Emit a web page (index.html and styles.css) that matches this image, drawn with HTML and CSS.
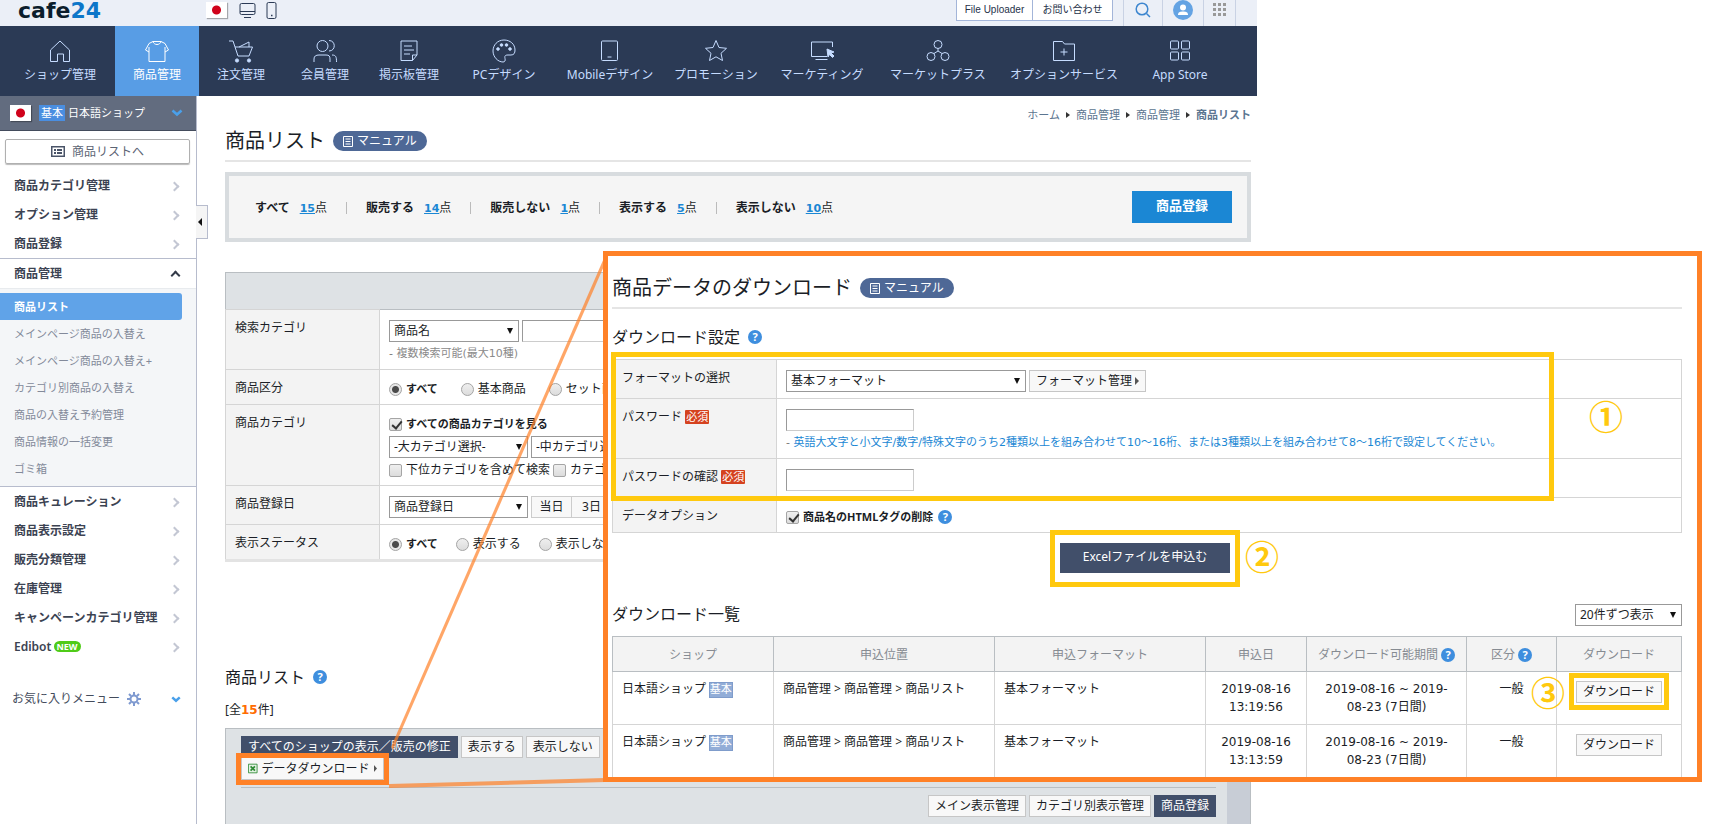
FILE: index.html
```html
<!DOCTYPE html>
<html lang="ja">
<head>
    <meta charset="UTF-8">
    <meta name="viewport" content="width=device-width, initial-scale=1.0">
    <title>商品リスト - cafe24</title>
    <link rel="stylesheet" href="styles.css">
</head>
<body>
    <div class="app">
        <header class="topbar">
            <a class="logo" href="#">cafe<span>24</span></a>
            <span class="flag"></span>
            <svg class="device" width="38" height="18" viewBox="0 0 38 18" fill="none" stroke="#2b3a55">
                <rect x="1" y="1.500" width="15" height="11" rx="1.500"/><path d="M1 9.500h15M5 15.500h7"/>
                <rect x="28" y=".5" width="9" height="16" rx="1.500"/><path d="M32 13.500h1.500" stroke-width="1.500"/>
            </svg>
            <div class="top-links">
                <a href="#">File Uploader</a>
                <a href="#">お問い合わせ</a>
            </div>
            <div class="top-icons">
                <a href="#" class="search"><svg width="16" height="16" viewBox="0 0 16 16" fill="none" stroke="#3d86cf" stroke-width="1.500"><circle cx="7" cy="7" r="5.800"/><path d="M11.500 11.500l3.500 3.500"/></svg></a>
                <a href="#" class="user"><svg width="20" height="20" viewBox="0 0 20 20"><circle cx="10" cy="10" r="10" fill="#64a3e3"/><circle cx="10" cy="7.500" r="3" fill="#fff"/><path d="M5 15c0-3 2-3.500 5-3.500s5 .5 5 3.500z" fill="#fff"/></svg></a>
                <a href="#" class="grid"><svg width="13" height="13" viewBox="0 0 13 13" fill="#999"><path d="M0 0h3v3H0zM5 0h3v3H5zM10 0h3v3h-3zM0 5h3v3H0zM5 5h3v3H5zM10 5h3v3h-3zM0 10h3v3H0zM5 10h3v3H5zM10 10h3v3h-3z"/></svg></a>
            </div>
        </header>

        <nav class="gnb">
            <a href="#" class="first"><svg viewBox="0 0 24 24"><path d="M2.500 11L12 2l9.500 9v11.500h-6V15h-6v7.500h-7z"/></svg>ショップ管理</a>
            <a href="#" class="on"><svg viewBox="0 0 24 24"><path d="M8 2.500L4 4.500 0.500 11l3.500 2v9.500h16V13l3.500-2L20 4.500 16 2.500c-1 4-7 4-8 0zM8 2.500h8M4 8v5M20 8v5"/></svg>商品管理</a>
            <a href="#"><svg viewBox="0 0 24 24"><path d="M0 2h4l5 15h11l3.500-9H6M10 8l10-5v5"/><circle class="fill" cx="8" cy="21.500" r="1.600"/><circle class="fill" cx="20" cy="21.500" r="1.600"/></svg>注文管理</a>
            <a href="#"><svg viewBox="0 0 24 24"><circle cx="9.500" cy="7" r="5.500"/><path d="M1 23v-3c0-3 2-4 5-4h7c3 0 4 1 4 4v3M16 1.500c7 0 7 10.500 0 10.500M19 16c4 0 4.500 2 4.500 7"/></svg>会員管理</a>
            <a href="#"><svg viewBox="0 0 24 24"><path d="M4 2h16v14l-4.500 5.500H4zM20 16h-4.500v5.500M7 7h8M7 11h10M7 15h6"/></svg>掲示板管理</a>
            <a href="#" class="mid"><svg viewBox="0 0 24 24"><path d="M12 1C5.500 1 1 6 1 12c0 6 5 11 10 11 2 0 2.500-1.500 2-3.500-.5-2.500 0-3.500 3-3.500h3c3 0 4-2 4-5C23 5 18 1 12 1z"/><circle class="fill" cx="6" cy="10" r="1.300"/><circle class="fill" cx="9.500" cy="6" r="1.300"/><circle class="fill" cx="14.500" cy="6" r="1.300"/><circle class="fill" cx="18" cy="10" r="1.300"/></svg>PCデザイン</a>
            <a href="#" class="mid"><svg viewBox="0 0 24 24"><rect x="3.500" y="2" width="16" height="19.500" rx="1"/><path d="M9.500 18h4"/></svg>Mobileデザイン</a>
            <a href="#" class="mid"><svg viewBox="0 0 24 24"><path d="M12 1.500l3 7 7.500.8-5.500 5 1.500 7.200-6.500-3.700-6.500 3.700L7 14.300l-5.500-5L9 8.500z"/></svg>プロモーション</a>
            <a href="#" class="mid"><svg viewBox="0 0 24 24"><path d="M22.500 8V3h-21v14.500H17M5.500 20.500h12"/><path class="fill" d="M17 10l7 3-3 1 3 3-1.500 1.500-3-3L18 18z"/></svg>マーケティング</a>
            <a href="#" class="long"><svg viewBox="0 0 24 24"><circle cx="12" cy="5.500" r="4"/><circle cx="5" cy="17.500" r="4"/><circle cx="19" cy="17.500" r="4"/><path d="M12 9.500V12l-4 2.500M12 12l4 2.500"/></svg>マーケットプラス</a>
            <a href="#" class="long"><svg viewBox="0 0 24 24"><path d="M1.500 21.500v-19h9l2 2.500h10v16.500zM12 9.500v7M8.500 13h7"/></svg>オプションサービス</a>
            <a href="#" class="mid"><svg viewBox="0 0 24 24"><rect x="2.500" y="2" width="8" height="8" rx="1"/><rect x="13.500" y="2" width="8" height="8" rx="1"/><rect x="2.500" y="13" width="8" height="8" rx="1"/><rect x="13.500" y="13" width="8" height="8" rx="1"/></svg>App Store</a>
        </nav>

        <div class="body">
            <aside class="sidebar">
                <div class="shop">
                    <span class="flag"></span>
                    <span class="shop-badge">基本</span>
                    <span>日本語ショップ</span>
                    <svg class="chev" width="12" height="8" viewBox="0 0 12 8" fill="none" stroke="#4aa0ea" stroke-width="2.500"><path d="M1.500 1.500L6 5.500l4.500-4"/></svg>
                </div>
                <a class="to-list" href="#">
                    <svg width="14" height="11" viewBox="0 0 14 11"><rect x=".75" y=".75" width="12.500" height="9.500" fill="none" stroke="#4a5468" stroke-width="1.500"/><path d="M3 3h2v2H3zM6 3h5v2H6zM3 6h2v2H3zM6 6h5v2H6z" fill="#4a5468"/></svg>
                    商品リストへ
                </a>
                <ul class="lnb">
                    <li><a href="#">商品カテゴリ管理</a></li>
                    <li><a href="#">オプション管理</a></li>
                    <li><a href="#">商品登録</a></li>
                    <li class="open"><a href="#">商品管理</a>
                        <ul>
                            <li class="on"><a href="#">商品リスト</a></li>
                            <li><a href="#">メインページ商品の入替え</a></li>
                            <li><a href="#">メインページ商品の入替え+</a></li>
                            <li><a href="#">カテゴリ別商品の入替え</a></li>
                            <li><a href="#">商品の入替え予約管理</a></li>
                            <li><a href="#">商品情報の一括変更</a></li>
                            <li><a href="#">ゴミ箱</a></li>
                        </ul>
                    </li>
                    <li><a href="#">商品キュレーション</a></li>
                    <li><a href="#">商品表示設定</a></li>
                    <li><a href="#">販売分類管理</a></li>
                    <li><a href="#">在庫管理</a></li>
                    <li><a href="#">キャンペーンカテゴリ管理</a></li>
                    <li><a href="#">Edibot <em>NEW</em></a></li>
                </ul>
                <div class="favorite">
                    <span>お気に入りメニュー</span>
                    <svg width="14" height="14" viewBox="0 0 14 14" fill="none" stroke="#7f9ad0"><circle cx="7" cy="7" r="3.500" stroke-width="2"/><path stroke-width="2" d="M7 0v3M7 11v3M0 7h3M11 7h3M2 2l2 2M10 10l2 2M2 12l2-2M10 4l2-2"/></svg>
                    <svg class="chev" width="10" height="7" viewBox="0 0 12 8" fill="none" stroke="#4aa0ea" stroke-width="3"><path d="M1.500 1.500L6 5.500l4.500-4"/></svg>
                </div>
                <button class="fold" type="button" aria-label="メニューを閉じる"></button>
            </aside>

            <main>
                <p class="path"><a href="#">ホーム</a><a href="#">商品管理</a><a href="#">商品管理</a><strong>商品リスト</strong></p>
                <h1>商品リスト <a class="manual" href="#"><svg width="10" height="11" viewBox="0 0 10 11" fill="none" stroke="#fff"><path d="M.5.500h9v10h-9zM2.500 3h5M2.500 5.500h5M2.500 8h5"/></svg>マニュアル</a></h1>

                <div class="summary">
                    <ul>
                        <li>すべて <span><a href="#">15</a>点</span></li>
                        <li>販売する <span><a href="#">14</a>点</span></li>
                        <li>販売しない <span><a href="#">1</a>点</span></li>
                        <li>表示する <span><a href="#">5</a>点</span></li>
                        <li>表示しない <span><a href="#">10</a>点</span></li>
                    </ul>
                    <button type="button" class="btn-regist">商品登録</button>
                </div>

                <div class="search-head"></div>
                <table class="form search-form">
                    <tr>
                        <th><label for="search-type">検索カテゴリ</label></th>
                        <td>
                            <div class="line">
                                <span class="select w130"><select id="search-type"><option>商品名</option></select></span>
                                <input type="text" class="keyword" aria-label="検索キーワード">
                            </div>
                            <p class="note"><span>-</span> 複数検索可能(最大10種)</p>
                        </td>
                    </tr>
                    <tr>
                        <th>商品区分</th>
                        <td>
                            <div class="line choices wide">
                                <label><input type="radio" name="kind" checked><b>すべて</b></label>
                                <label><input type="radio" name="kind">基本商品</label>
                                <label><input type="radio" name="kind">セット商品</label>
                            </div>
                        </td>
                    </tr>
                    <tr>
                        <th>商品カテゴリ</th>
                        <td>
                            <div class="line choices"><label><input type="checkbox" checked><b>すべての商品カテゴリを見る</b></label></div>
                            <div class="line">
                                <span class="select w138"><select aria-label="大カテゴリ"><option>-大カテゴリ選択-</option></select></span>
                                <span class="select w138"><select aria-label="中カテゴリ"><option>-中カテゴリ選択-</option></select></span>
                            </div>
                            <div class="line choices tight">
                                <label><input type="checkbox">下位カテゴリを含めて検索</label>
                                <label><input type="checkbox">カテゴリ未登録</label>
                            </div>
                        </td>
                    </tr>
                    <tr>
                        <th><label for="date-type">商品登録日</label></th>
                        <td>
                            <div class="line">
                                <span class="select w138"><select id="date-type"><option>商品登録日</option></select></span>
                                <span class="days"><button type="button">当日</button><button type="button">3日</button></span>
                            </div>
                        </td>
                    </tr>
                    <tr>
                        <th>表示ステータス</th>
                        <td>
                            <div class="line choices">
                                <label><input type="radio" name="display" checked><b>すべて</b></label>
                                <label><input type="radio" name="display">表示する</label>
                                <label><input type="radio" name="display">表示しない</label>
                            </div>
                        </td>
                    </tr>
                </table>

                <h2>商品リスト <span class="help">?</span></h2>
                <p class="total">[全<strong>15</strong>件]</p>
                <div class="list-panel">
                    <div class="list-inner">
                        <div class="row">
                            <button type="button" class="btn dark">すべてのショップの表示／販売の修正</button>
                            <button type="button" class="btn">表示する</button>
                            <button type="button" class="btn">表示しない</button>
                        </div>
                        <div class="row">
                            <span class="excel-mark">
                                <button type="button" class="btn excel"><svg width="11" height="11" viewBox="0 0 11 11" fill="none" stroke="#2e8b35"><path fill="#e4f3e4" d="M.5.500h10v10H.5z"/><path stroke-width="2" d="M3 3l5 5M8 3L3 8"/></svg>データダウンロード<i class="arrow"></i></button>
                            </span>
                        </div>
                        <div class="row bottom">
                            <button type="button" class="btn">メイン表示管理</button>
                            <button type="button" class="btn">カテゴリ別表示管理</button>
                            <button type="button" class="btn dark">商品登録</button>
                        </div>
                    </div>
                </div>
            </main>
        </div>
    </div>

    <!-- guide lines from the download button to the popup -->
    <svg class="guide" width="216" height="536" viewBox="0 0 216 536">
        <path d="M215 6v8L4 498l-2-3z"/>
        <path d="M0 532l216-6v4L0 536z"/>
    </svg>

    <section class="popup">
        <h1>商品データのダウンロード <a class="manual" href="#"><svg width="10" height="11" viewBox="0 0 10 11" fill="none" stroke="#fff"><path d="M.5.500h9v10h-9zM2.500 3h5M2.500 5.500h5M2.500 8h5"/></svg>マニュアル</a></h1>
        <h2>ダウンロード設定 <span class="help">?</span></h2>
        <div class="setting">
            <table class="form setting-form">
                <tr>
                    <th><label for="format">フォーマットの選択</label></th>
                    <td>
                        <div class="line">
                            <span class="select w240"><select id="format"><option>基本フォーマット</option></select></span>
                            <button type="button" class="btn">フォーマット管理<i class="arrow"></i></button>
                        </div>
                    </td>
                </tr>
                <tr>
                    <th><label for="pw">パスワード</label> <span class="required">必須</span></th>
                    <td>
                        <div class="line"><input type="password" id="pw"></div>
                        <p class="note blue"><span>-</span> 英語大文字と小文字/数字/特殊文字のうち2種類以上を組み合わせて10～16桁、または3種類以上を組み合わせて8～16桁で設定してください。</p>
                    </td>
                </tr>
                <tr>
                    <th><label for="pw2">パスワードの確認</label> <span class="required">必須</span></th>
                    <td><div class="line"><input type="password" id="pw2"></div></td>
                </tr>
                <tr>
                    <th>データオプション</th>
                    <td><div class="line choices"><label><input type="checkbox" checked><b>商品名のHTMLタグの削除</b></label><span class="help">?</span></div></td>
                </tr>
            </table>
            <div class="mark-setting"></div>
            <span class="step one">①</span>
        </div>

        <div class="apply">
            <button type="button">Excelファイルを申込む</button>
            <span class="step two">②</span>
        </div>

        <div class="list-head">
            <h2>ダウンロード一覧</h2>
            <span class="select w107"><select aria-label="表示件数"><option>20件ずつ表示</option></select></span>
        </div>
        <table class="downloads">
            <colgroup><col class="c-shop"><col><col class="c-format"><col class="c-date"><col class="c-term"><col class="c-type"><col class="c-down"></colgroup>
            <thead>
                <tr>
                    <th>ショップ</th><th>申込位置</th><th>申込フォーマット</th><th>申込日</th>
                    <th>ダウンロード可能期間 <span class="help">?</span></th><th>区分 <span class="help">?</span></th><th>ダウンロード</th>
                </tr>
            </thead>
            <tbody>
                <tr>
                    <td>日本語ショップ <span class="basic">基本</span></td>
                    <td class="where">商品管理 &gt; 商品管理 &gt; 商品リスト</td>
                    <td>基本フォーマット</td>
                    <td class="center">2019-08-16 13:19:56</td>
                    <td class="center">2019-08-16 ~ 2019-08-23 (7日間)</td>
                    <td class="center">一般</td>
                    <td class="center"><span class="mark-down"><button type="button" class="btn">ダウンロード</button><span class="step three">③</span></span></td>
                </tr>
                <tr>
                    <td>日本語ショップ <span class="basic">基本</span></td>
                    <td class="where">商品管理 &gt; 商品管理 &gt; 商品リスト</td>
                    <td>基本フォーマット</td>
                    <td class="center">2019-08-16 13:13:59</td>
                    <td class="center">2019-08-16 ~ 2019-08-23 (7日間)</td>
                    <td class="center">一般</td>
                    <td class="center"><button type="button" class="btn">ダウンロード</button></td>
                </tr>
            </tbody>
        </table>
    </section>
</body>
</html>
```
FILE: styles.css
```css
* {
    box-sizing: border-box;
}
body {
    position: relative;
    margin: 0;
    height: 100vh;
    overflow: hidden;
    background: #fff;
    color: #1b1e26;
    font: 12px/18px "Noto Sans", "Noto Sans CJK JP", sans-serif;
}
button, input, select {
    font: inherit;
    color: inherit;
    margin: 0;
}
a {
    color: inherit;
    text-decoration: none;
}
ul {
    list-style: none;
    margin: 0;
    padding: 0;
}
h1, h2, p {
    margin: 0;
    font-weight: 400;
}
table {
    border-collapse: collapse;
}
.app {
    display: flex;
    flex-direction: column;
    height: 100%;
    margin-right: 453px;
}

/* top bar */
.topbar {
    display: flex;
    align-items: flex-start;
    height: 26px;
    padding-left: 18px;
    background: #ebeff7;
}
.logo {
    width: 188px;
    font: bold 22px/22px "DejaVu Sans", sans-serif;
    color: #0b1d2c;
}
.logo span {
    color: #0c76c9;
}
.flag {
    width: 21px;
    height: 16px;
    background: radial-gradient(circle, #d0021b 4px, #fff 5px);
    box-shadow: 1px 1px 1px rgba(0, 0, 0, 0.3);
}
.topbar .flag {
    margin-top: 2px;
}
.device {
    margin: 2px 0 0 12px;
}
.top-links {
    display: flex;
    margin-left: auto;
    border: 1px solid #a3b5d9;
    border-top: 0;
    background: #fff;
    font: 10px/20px "Liberation Sans", "Noto Sans CJK JP", sans-serif;
    color: #26324a;
}
.top-links a {
    width: 79px;
    text-align: center;
}
.top-links a:first-child {
    width: 76px;
    border-right: 1px solid #a3b5d9;
}
.top-icons {
    display: flex;
    height: 26px;
    margin: 0 21px 0 10px;
    border-right: 1px solid #c9d2e4;
}
.top-icons a {
    display: flex;
    justify-content: center;
    width: 41px;
    border-left: 1px solid #c9d2e4;
}
.top-icons .search {
    width: 39px;
    padding-top: 2px;
}
.top-icons .grid {
    width: 32px;
    padding-top: 3px;
}

/* global menu */
.gnb {
    display: flex;
    height: 70px;
    background: #2b3a55;
    color: #c6dcff;
    white-space: nowrap;
}
.gnb a {
    display: flex;
    flex-direction: column;
    align-items: center;
    width: 84px;
    padding-top: 13px;
    line-height: 24px;
}
.gnb .first {
    width: 115px;
    padding-left: 5px;
}
.gnb .mid {
    width: 106px;
}
.gnb .long {
    width: 126px;
}
.gnb .on {
    background: #589de5;
    color: #fff;
}
.gnb svg {
    width: 24px;
    height: 24px;
    fill: none;
    stroke: currentColor;
}
.gnb .fill {
    fill: currentColor;
}

/* sidebar */
.body {
    display: flex;
    flex: 1;
    min-height: 0;
}
.sidebar {
    position: relative;
    flex: 0 0 197px;
    border-right: 1px solid #b7bccd;
}
.shop {
    display: flex;
    align-items: center;
    height: 35px;
    padding: 0 13px 0 10px;
    background: #626c7f;
    border-bottom: 1px solid #434b5c;
    color: #fff;
    font-size: 11px;
}
.shop-badge {
    margin: 0 3px 0 8px;
    padding: 0 2px;
    background: #4a8ee0;
    line-height: 16px;
}
.chev {
    margin-left: auto;
}
.to-list {
    display: flex;
    align-items: center;
    justify-content: center;
    gap: 7px;
    height: 25px;
    margin: 8px 6px 7px 5px;
    border: 1px solid #b0b0b0;
    border-radius: 2px;
    box-shadow: 0 1px 1px #bbb;
    color: #5c6474;
}
.lnb a {
    display: block;
    position: relative;
    padding-left: 14px;
    line-height: 29px;
    font-weight: 600;
    color: #3c4352;
}
.lnb > li > a::after {
    content: "";
    position: absolute;
    right: 18px;
    top: 12px;
    width: 5px;
    height: 5px;
    border: 2px solid #c3c7d3;
    border-width: 2px 2px 0 0;
    transform: rotate(45deg);
}
.lnb > .open > a::after {
    top: 13px;
    right: 17px;
    border-color: #343b49;
    transform: rotate(-45deg);
}
.lnb .open {
    border: 1px solid #b7bccd;
    border-width: 1px 0;
}
.lnb ul {
    padding: 4px 14px 4px 0;
    background: #f4f6f8;
    border-top: 1px solid #e8ebee;
}
.lnb ul a {
    font-size: 11px;
    line-height: 27px;
    font-weight: 400;
    color: #838a9a;
}
.lnb ul .on a {
    border-radius: 0 3px 3px 0;
    background: #60a3e8;
    color: #fff;
    font-weight: 700;
}
.lnb em {
    padding: 0 3px;
    border-radius: 6px;
    background: #4fcb18;
    color: #fff;
    font: bold 9px/11px "Noto Sans", sans-serif;
    display: inline-block;
    vertical-align: 1px;
    margin-left: -1px;
}
.favorite {
    display: flex;
    align-items: center;
    gap: 7px;
    margin-top: 29px;
    padding: 0 15px 0 12px;
    color: #444c5c;
}
.fold {
    position: absolute;
    left: 196px;
    top: 109px;
    width: 12px;
    height: 34px;
    padding: 0;
    border: 1px solid #b7bccd;
    border-left: 0;
    background: #f5f5f5;
}
.fold::before {
    content: "";
    display: block;
    width: 4px;
    height: 8px;
    margin-left: 2px;
    background: #111;
    clip-path: polygon(100% 0, 100% 100%, 0 50%);
}

/* content */
main {
    flex: 1;
    min-width: 0;
    padding: 10px 6px 0 28px;
}
.path {
    display: flex;
    justify-content: flex-end;
    font-size: 11px;
    color: #5b7590;
}
.path a::after {
    content: "";
    display: inline-block;
    width: 4px;
    height: 6px;
    margin: 0 6px;
    background: #333;
    clip-path: polygon(0 0, 100% 50%, 0 100%);
    vertical-align: 1px;
}
h1 {
    display: flex;
    align-items: center;
    gap: 8px;
    padding: 3px 0 5px;
    border-bottom: 2px solid #e5e5e5;
    font-size: 20px;
    line-height: 28px;
}
main h1 {
    margin-bottom: 10px;
}
.manual {
    display: flex;
    align-items: center;
    gap: 4px;
    padding: 0 10px;
    border-radius: 10px;
    background: #4e6896;
    color: #fff;
    font-size: 12px;
    line-height: 20px;
}
.summary {
    display: flex;
    align-items: center;
    height: 70px;
    padding: 0 15px 0 6px;
    border: 4px solid #d8dcdf;
    background: #f5f5f5;
}
.summary ul {
    display: flex;
    padding-top: 2px;
    font-weight: 600;
}
.summary li {
    display: flex;
    gap: 10px;
    padding: 0 19px 0 20px;
}
.summary li + li {
    background: linear-gradient(#bbb, #bbb) left center / 1px 12px no-repeat;
}
.summary li span {
    font-weight: 400;
}
.summary li a {
    color: #1b87d4;
    font: bold 11px "DejaVu Sans", sans-serif;
    text-decoration: underline;
}
.btn-regist {
    width: 100px;
    height: 32px;
    margin-left: auto;
    padding: 0 0 4px;
    border: 0;
    background: #1b87d4;
    color: #fff;
    font-size: 13px;
    font-weight: 600;
}

/* form tables */
.search-head {
    height: 37px;
    margin-top: 30px;
    border: 1px solid #b9bec2;
    border-bottom: 0;
    background: #dee2e5;
}
.form {
    width: 100%;
    border: 1px solid #d5d5d5;
}
.search-form {
    border-top-color: #b9bec2;
    border-bottom: 3px solid #e3e3e3;
}
.form th {
    width: 154px;
    padding: 9px 0 7px 9px;
    border: 1px solid #d5d5d5;
    background: #f3f3f3;
    font-weight: 400;
    text-align: left;
    vertical-align: top;
}
.setting-form th {
    width: 164px;
}
.form td {
    padding: 10px 0 6px 9px;
    border-bottom: 1px solid #d5d5d5;
    white-space: nowrap;
    vertical-align: top;
}
.line {
    display: flex;
    gap: 3px;
}
.choices {
    gap: 18px;
    align-items: center;
    height: 18px;
}
.choices.wide {
    gap: 23px;
}
.choices.tight {
    gap: 3px;
}
.choices label {
    display: flex;
    align-items: center;
    gap: 4px;
}
.choices b {
    font-size: 11px;
}
.choices .help {
    margin-left: -13px;
}
.choices + .line {
    margin: 3px 0;
}
.note {
    padding-top: 3px;
    font-family: "DejaVu Sans", "Noto Sans CJK JP", sans-serif;
    font-size: 11px;
    color: #8a8a8a;
}
.note.blue {
    color: #1b87d4;
}
.note span {
    color: #777;
}
.select {
    position: relative;
    display: block;
}
.select select {
    appearance: none;
    display: block;
    width: 100%;
    height: 22px;
    padding: 0 4px;
    border: 1px solid #999;
    border-radius: 0;
    background: #fff;
}
.select::after {
    content: "";
    position: absolute;
    right: 6px;
    top: 8px;
    width: 6px;
    height: 6px;
    background: #111;
    clip-path: polygon(0 0, 100% 0, 50% 100%);
    pointer-events: none;
}
.w107 { width: 107px; }
.w130 { width: 130px; }
.w138 { width: 139px; }
.w240 { width: 240px; }
input[type="text"], input[type="password"] {
    width: 128px;
    height: 22px;
    border: 1px solid #ccc;
    border-top-color: #999;
    border-left-color: #999;
}
input.keyword {
    width: 300px;
}
input[type="radio"], input[type="checkbox"] {
    appearance: none;
    flex: 0 0 13px;
    height: 13px;
    border: 1px solid #a5a5a5;
    border-radius: 2px;
    background: linear-gradient(#efefef, #dcdcdc);
}
input[type="radio"] {
    border-radius: 50%;
}
input[type="radio"]:checked {
    background: radial-gradient(circle, #4a4a4a 3px, #e6e6e6 4px);
}
input[type="checkbox"]:checked::after {
    content: "";
    display: block;
    width: 4px;
    height: 8px;
    margin-left: 4px;
    border: 2px solid #333;
    border-width: 0 2px 2px 0;
    transform: rotate(40deg);
}
.days {
    display: flex;
}
.days button {
    width: 41px;
    height: 22px;
    margin-right: -1px;
    padding: 0;
    border: 1px solid #ccc;
    background: #f8f8f8;
}
.btn {
    height: 22px;
    padding: 0 6px;
    border: 1px solid #c6c6c6;
    background: #f8f8f8;
    line-height: 20px;
    white-space: nowrap;
}
.btn.dark {
    border-color: #414f6a;
    background: #414f6a;
    color: #fff;
}
.arrow {
    display: inline-block;
    width: 4px;
    height: 8px;
    margin-left: 3px;
    background: #555;
    clip-path: polygon(0 0, 100% 50%, 0 100%);
}
h2 {
    display: flex;
    align-items: center;
    gap: 8px;
    font-size: 16px;
    line-height: 24px;
}
.help {
    display: inline-block;
    width: 14px;
    height: 14px;
    border-radius: 50%;
    background: #3e8ede;
    color: #fff;
    font: bold 11px/14px "Noto Sans", sans-serif;
    text-align: center;
}

/* product list */
main h2 {
    margin-top: 103px;
}
.total {
    margin: 12px 0 9px;
}
.total strong {
    color: #ff6c00;
    font-family: "DejaVu Sans", sans-serif;
}
.list-panel {
    height: 200px;
    padding-right: 23px;
    border: 1px solid #b9bec2;
    background: #c8cdd6;
}
.list-inner {
    height: 100%;
    padding: 7px 11px 0 15px;
    background: #dee2e5;
}
.row {
    display: flex;
    gap: 3px;
}
.row.bottom {
    justify-content: flex-end;
    margin-top: 7px;
    padding-top: 7px;
    border-top: 1px solid #b9bec2;
}
.excel-mark {
    outline: 5px solid #ff8127;
}
.excel {
    display: flex;
    align-items: center;
    gap: 4px;
    width: 143px;
    border-top: 0;
}
.excel .arrow {
    margin-left: 0;
}
.guide {
    position: absolute;
    left: 389px;
    top: 252px;
    fill: #ff8127;
    opacity: 0.7;
}

/* download popup */
.popup {
    position: absolute;
    left: 603px;
    right: 8px;
    top: 251px;
    height: 531px;
    overflow: hidden;
    padding: 15px 15px 0 4px;
    border: 5px solid #ff8127;
    background: #fff;
}
.popup > h2 {
    margin: 16px 0 10px;
}
.setting {
    position: relative;
}
.mark-setting {
    position: absolute;
    left: -1px;
    right: 128px;
    top: -7px;
    height: 149px;
    border: 5px solid #ffc90e;
}
.step {
    position: absolute;
    color: #ffc90e;
    font: bold 34px/34px "Noto Sans CJK JP", sans-serif;
}
.one {
    right: 59px;
    top: 40px;
}
.required {
    display: inline-block;
    padding: 0 1px;
    border-radius: 1px;
    background: #d5421f;
    color: #fff;
    font-size: 11px;
    line-height: 14px;
}
.apply {
    position: relative;
    left: -2px;
    width: 190px;
    margin: -3px auto 15px;
    padding: 8px 5px 9px;
    border: 5px solid #ffc90e;
}
.apply button {
    display: block;
    width: 100%;
    height: 30px;
    padding: 0 0 3px;
    border: 0;
    background: #414f6a;
    color: #fff;
}
.two {
    left: 190px;
    top: 4px;
}
.list-head {
    display: flex;
    justify-content: space-between;
    align-items: flex-end;
    margin-bottom: 10px;
}
.downloads {
    width: 100%;
    table-layout: fixed;
}
.c-shop { width: 161px; }
.c-format { width: 211px; }
.c-date { width: 101px; }
.c-term { width: 160px; }
.c-type { width: 90px; }
.c-down { width: 125px; }
.downloads th {
    height: 35px;
    padding: 1px 0 0;
    border: 1px solid #b9bec2;
    background: #f3f3f3;
    color: #868b92;
    font-weight: 400;
}
.downloads td {
    height: 53px;
    padding: 8px 9px;
    border: 1px solid #d5d5d5;
    font-family: "DejaVu Sans", "Noto Sans CJK JP", sans-serif;
    vertical-align: top;
}
.downloads .where {
    font-family: "Noto Sans", "Noto Sans CJK JP", sans-serif;
}
.downloads .center {
    padding: 8px 13px;
    text-align: center;
}
.basic {
    display: inline-block;
    margin-left: -1px;
    border: 1px solid #7f9ccb;
    background: #92add7;
    color: #fff;
    font-size: 11px;
    line-height: 14px;
}
.mark-down {
    position: relative;
    display: inline-block;
    outline: 5px solid #ffc90e;
    outline-offset: 2px;
}
.downloads .btn {
    display: block;
    margin: 1px auto 0;
}
.three {
    right: 97px;
    top: -5px;
}
```
